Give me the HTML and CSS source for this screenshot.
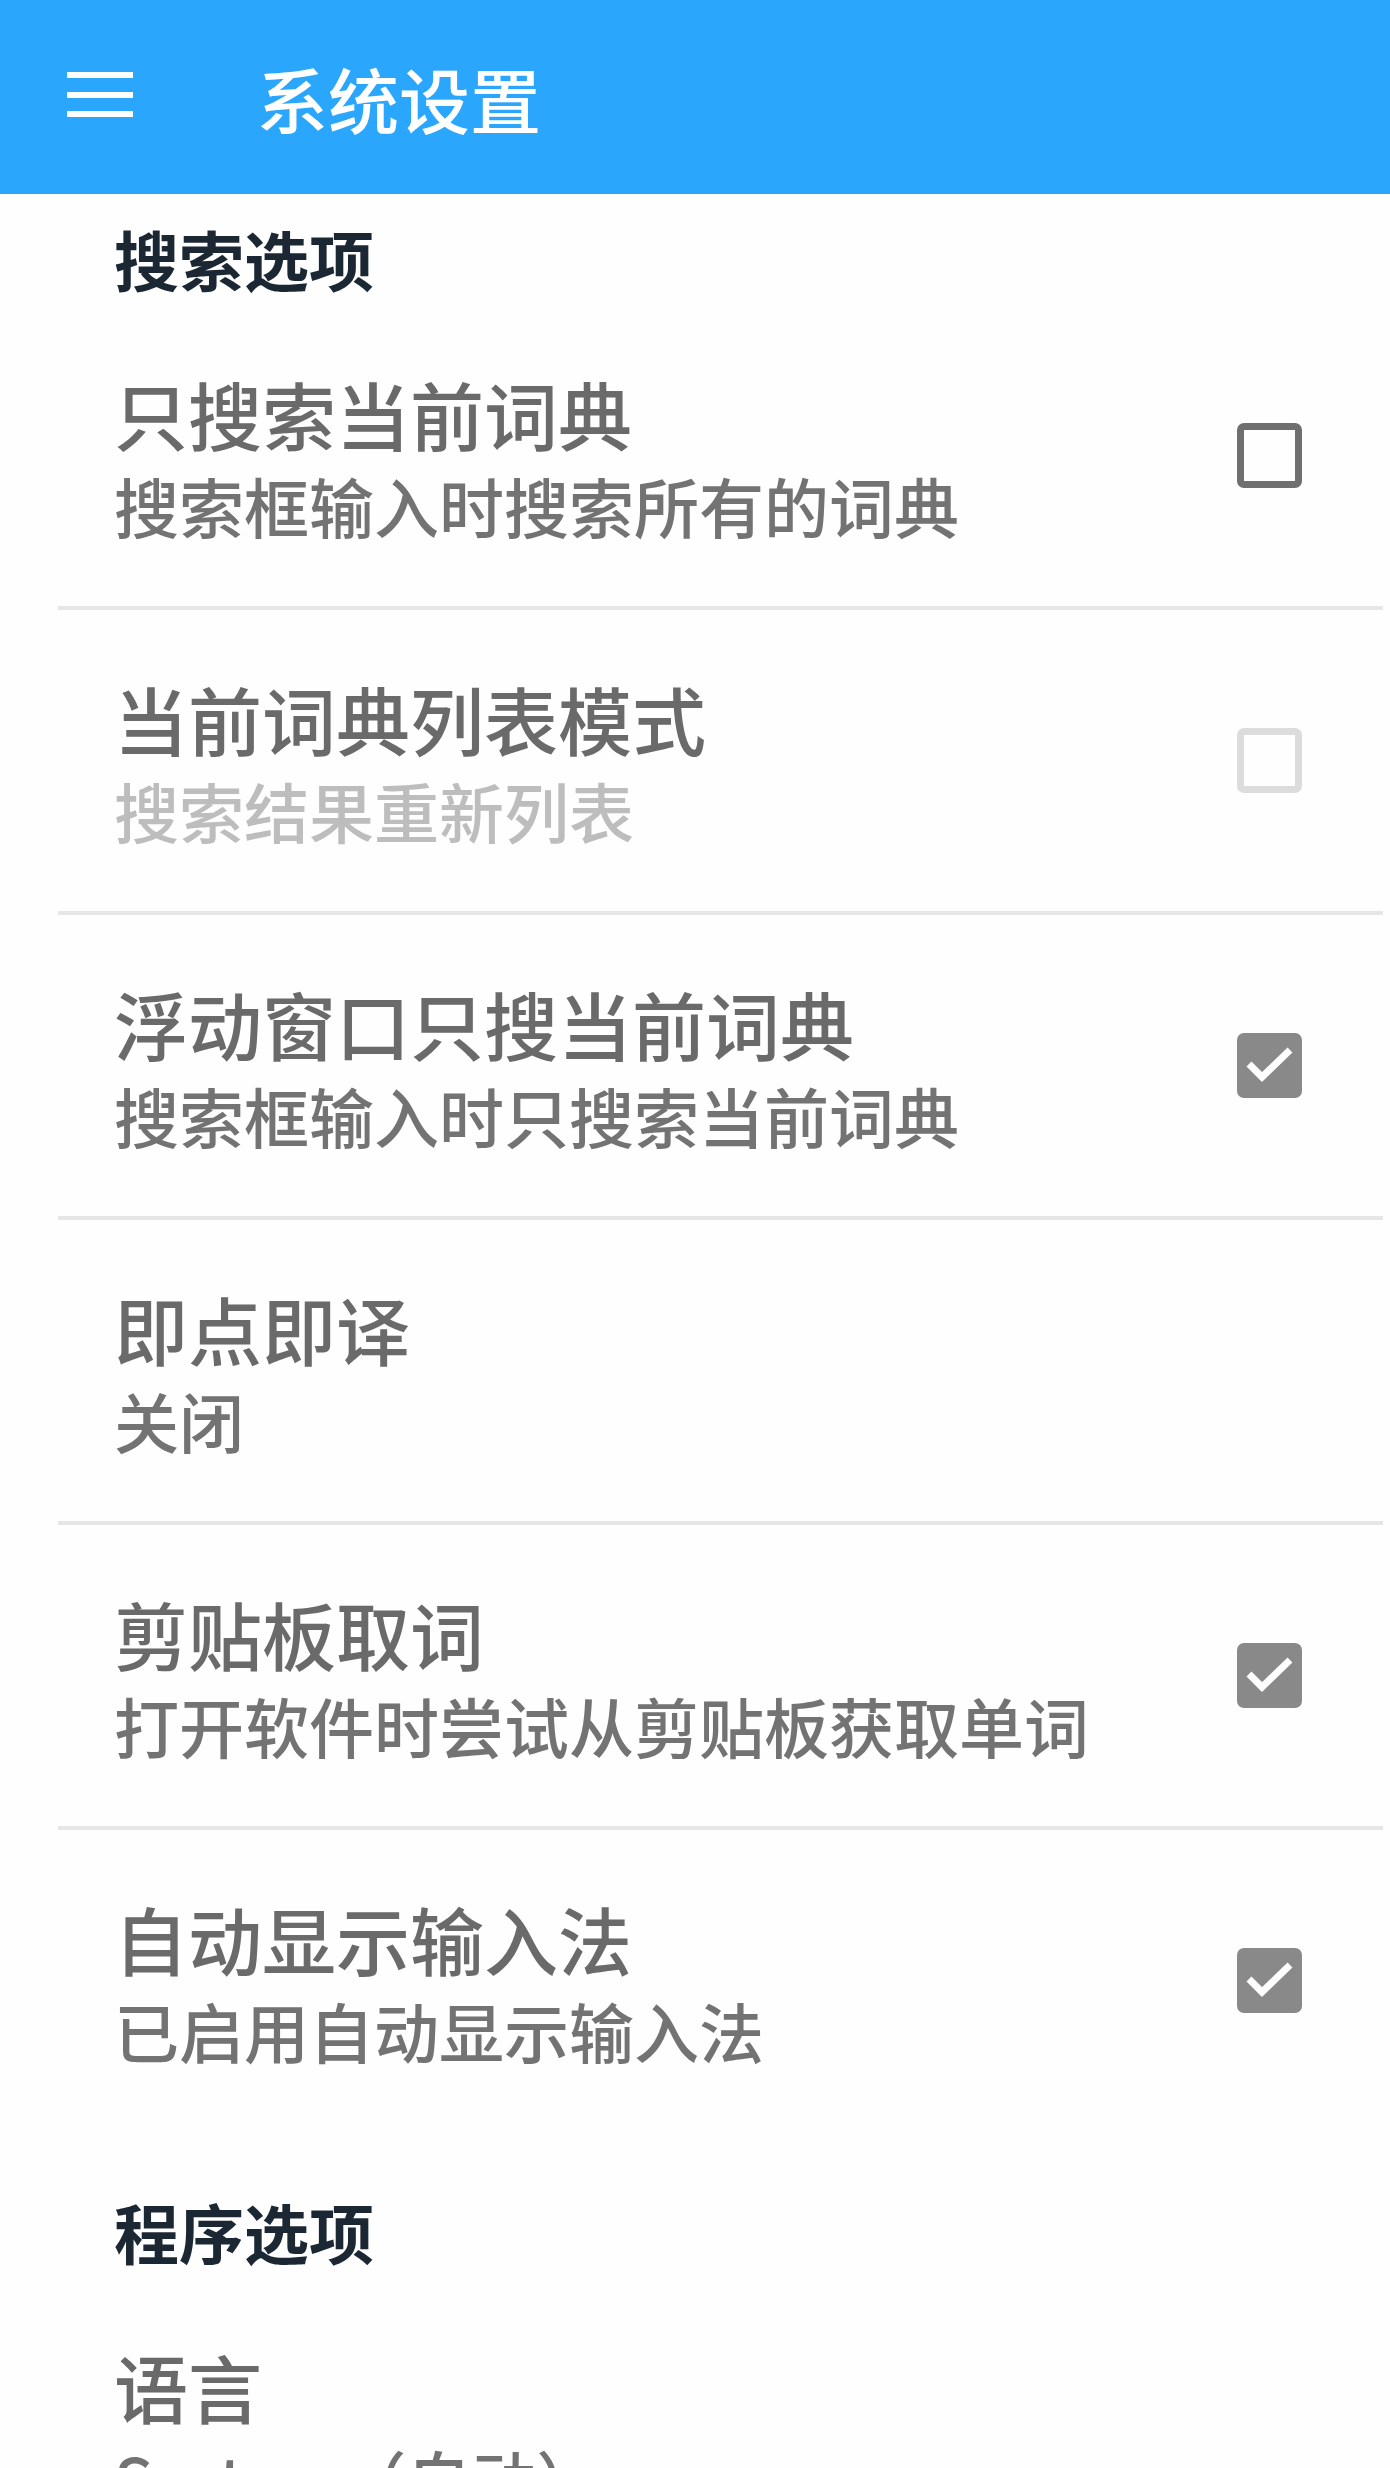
FILE: index.html
```html
<!DOCTYPE html>
<html lang="zh-CN">
<head>
    <meta charset="UTF-8">
    <meta name="viewport" content="width=device-width, initial-scale=1.0">
    <title>系统设置</title>
    <link rel="stylesheet" href="styles.css">
</head>
<body>

    <header class="toolbar">
        <svg class="menu-icon" width="66" height="45" viewBox="0 0 66 45">
            <rect x="0" y="0" width="66" height="6" fill="#fff"/>
            <rect x="0" y="20" width="66" height="6" fill="#fff"/>
            <rect x="0" y="39" width="66" height="6" fill="#fff"/>
        </svg>
        <h1 class="toolbar-title">系统设置</h1>
    </header>

    <!-- 搜索选项 -->
    <div class="category">搜索选项</div>

    <div class="pref">
        <div class="pref-text">
            <div class="pref-title">只搜索当前词典</div>
            <div class="pref-summary">搜索框输入时搜索所有的词典</div>
        </div>
        <span class="checkbox"></span>
    </div>

    <div class="pref disabled">
        <div class="pref-text">
            <div class="pref-title">当前词典列表模式</div>
            <div class="pref-summary">搜索结果重新列表</div>
        </div>
        <span class="checkbox"></span>
    </div>

    <div class="pref">
        <div class="pref-text">
            <div class="pref-title">浮动窗口只搜当前词典</div>
            <div class="pref-summary">搜索框输入时只搜索当前词典</div>
        </div>
        <span class="checkbox checked">
            <svg width="65" height="65" viewBox="0 0 65 65"><polyline points="12,31 25,44 53,17" fill="none" stroke="#fff" stroke-width="7"/></svg>
        </span>
    </div>

    <div class="pref">
        <div class="pref-text">
            <div class="pref-title">即点即译</div>
            <div class="pref-summary">关闭</div>
        </div>
    </div>

    <div class="pref">
        <div class="pref-text">
            <div class="pref-title">剪贴板取词</div>
            <div class="pref-summary">打开软件时尝试从剪贴板获取单词</div>
        </div>
        <span class="checkbox checked">
            <svg width="65" height="65" viewBox="0 0 65 65"><polyline points="12,31 25,44 53,17" fill="none" stroke="#fff" stroke-width="7"/></svg>
        </span>
    </div>

    <div class="pref last">
        <div class="pref-text">
            <div class="pref-title">自动显示输入法</div>
            <div class="pref-summary">已启用自动显示输入法</div>
        </div>
        <span class="checkbox checked">
            <svg width="65" height="65" viewBox="0 0 65 65"><polyline points="12,31 25,44 53,17" fill="none" stroke="#fff" stroke-width="7"/></svg>
        </span>
    </div>

    <!-- 程序选项 -->
    <div class="category next">程序选项</div>

    <div class="pref last">
        <div class="pref-text">
            <div class="pref-title">语言</div>
            <div class="pref-summary">System（自动）</div>
        </div>
    </div>

</body>
</html>
```

FILE: styles.css
```css
body {
    margin: 0;
    background-color: #fefefe;
    font-family: "Noto Sans CJK SC", "Noto Sans", sans-serif;
    overflow: hidden;
}
.toolbar {
    height: 194px;
    background-color: #2aa7fd;
    display: flex;
    align-items: center;
    padding-left: 67px;
}
.menu-icon {
    display: block;
    margin-top: -5px;
}
.toolbar-title {
    margin: 0 0 0 124px;
    color: #fff;
    font-size: 71px;
    font-weight: 500;
    line-height: 1;
}
.category {
    height: 111px;
    box-sizing: border-box;
    padding: 24px 0 0 114px;
    font-size: 65px;
    line-height: 80px;
    font-weight: 700;
    color: #1b2733;
}
.category.next {
    margin-top: 36px;
}
.pref {
    display: flex;
    align-items: center;
    height: 301px;
    margin-left: 58px;
    margin-right: 7px;
    padding-left: 56px;
    padding-right: 81px;
    border-bottom: 4px solid #e6e6e6;
}
.pref.last {
    border-bottom: none;
}
.pref-text {
    flex: 1;
    padding-top: 3px;
}
.pref-title {
    font-size: 74px;
    line-height: 96px;
    font-weight: 500;
    color: #6a6a6a;
}
.pref-summary {
    font-size: 65px;
    line-height: 88px;
    font-weight: 500;
    color: #737373;
}
.disabled .pref-summary {
    color: #bdbdbd;
}
.checkbox {
    width: 65px;
    height: 65px;
    box-sizing: border-box;
    border: 7px solid #6f6f6f;
    border-radius: 7px;
    flex-shrink: 0;
}
.disabled .checkbox {
    border-color: #dcdcdc;
}
.checkbox.checked {
    border: none;
    background-color: #898989;
}
.checkbox svg {
    display: block;
}
```
